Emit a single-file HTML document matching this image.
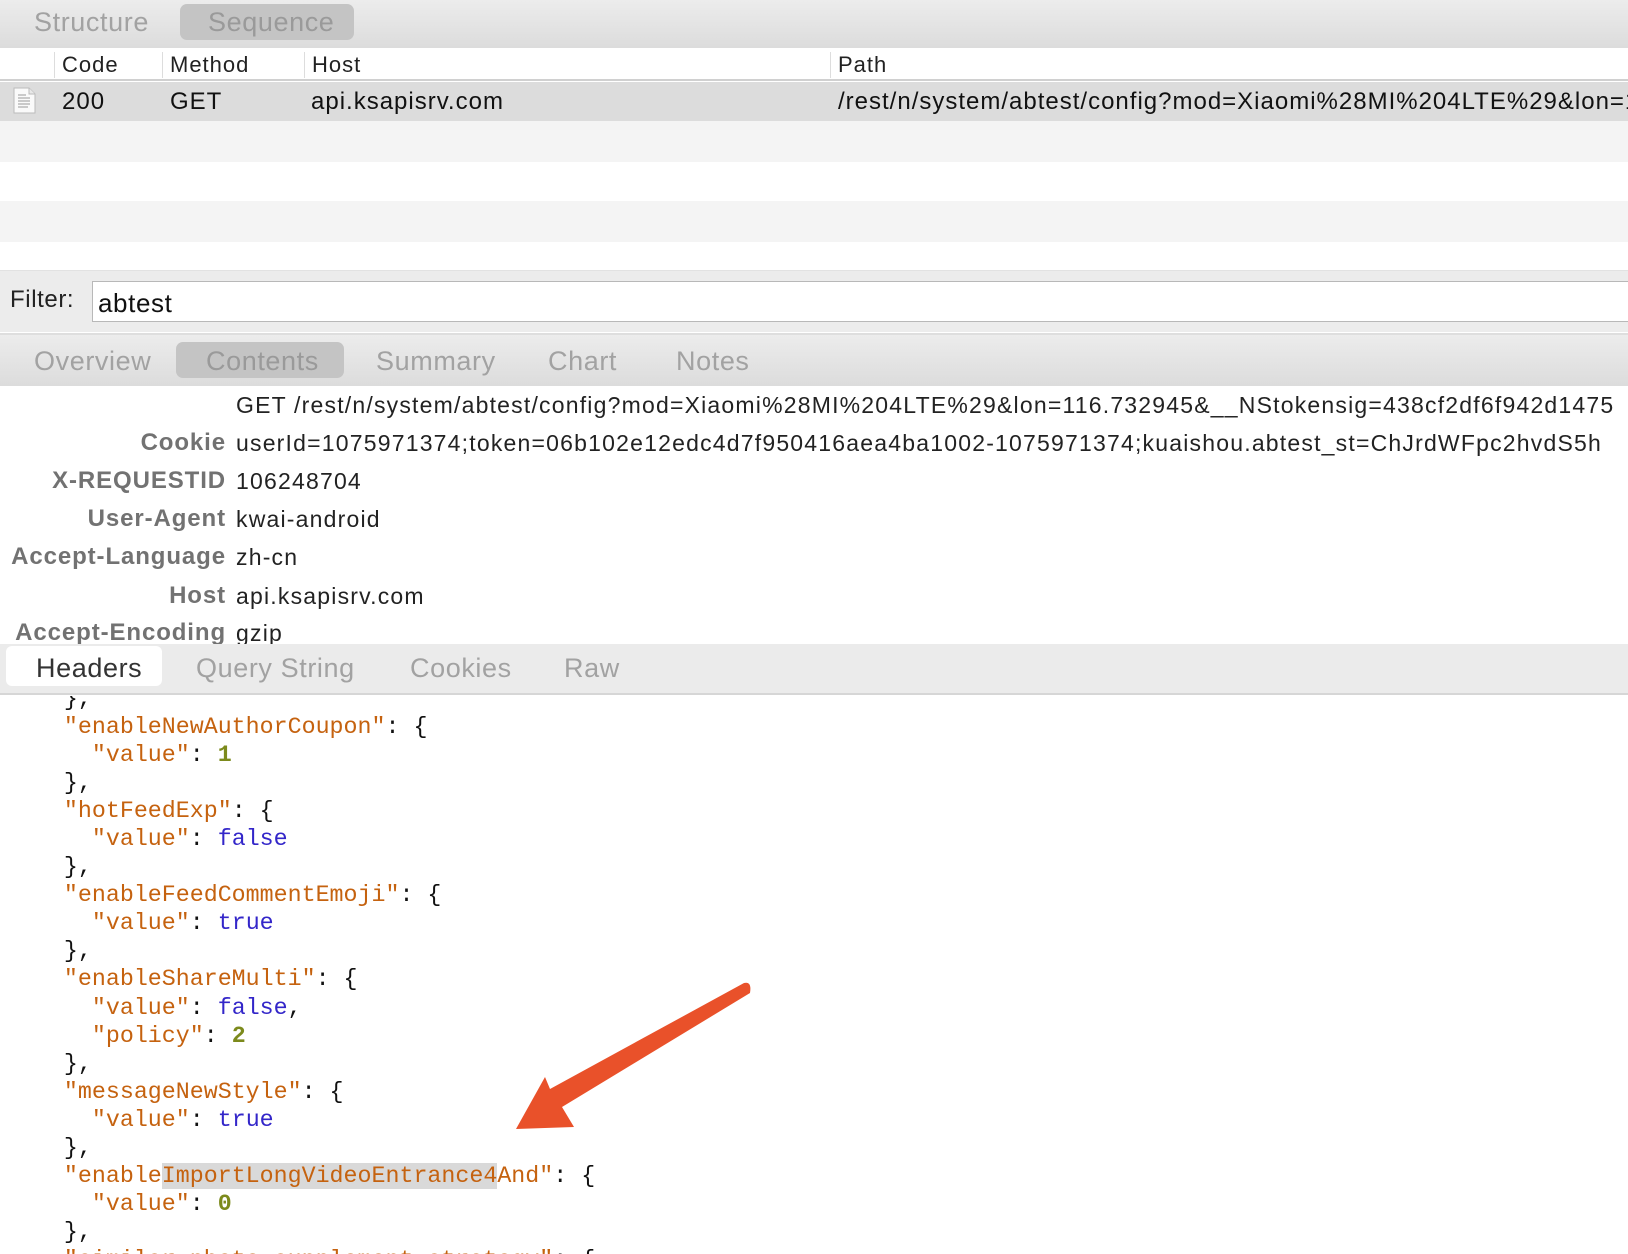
<!DOCTYPE html>
<html><head><meta charset="utf-8">
<style>
*{margin:0;padding:0;box-sizing:border-box}
html,body{width:1628px;height:1254px;overflow:hidden}
body{background:#fff;position:relative;font-family:"Liberation Sans",sans-serif;color:#222}
#w{position:absolute;left:0;top:0;width:1628px;height:1254px;overflow:hidden}
.a{position:absolute;white-space:nowrap}
.tb{background:linear-gradient(#ececec,#dcdcdc)}
.tab{font-size:27px;letter-spacing:0.6px;color:#a2a2a2;position:absolute;white-space:nowrap}
.pill{position:absolute;background:#c4c4c4;border-radius:7px}
.hd{font-size:22px;letter-spacing:1px;color:#222}
.sep{position:absolute;top:52px;width:1px;height:26px;background:#ddd}
.lbl{position:absolute;right:1402px;font-weight:bold;color:#727272;font-size:24px;letter-spacing:0.9px;white-space:nowrap}
.val{position:absolute;left:236px;font-size:23px;color:#222;white-space:nowrap;letter-spacing:1.2px}
.code{position:absolute;left:8px;font-family:"Liberation Mono",monospace;font-size:23.3px;line-height:28.05px;white-space:pre;color:#111}
.k{color:#c5620f}.n{color:#7c8a1c;font-weight:bold}.b{color:#3326c9}
.hl{background:#d9d9d9}
.big{font-size:24px;letter-spacing:1px;color:#111}
</style></head><body><div id="w">
<div class="a tb" style="left:0;top:0;width:1628px;height:48px"></div>
<div class="pill" style="left:180px;top:4px;width:174px;height:36px"></div>
<div class="tab" style="left:34px;top:7px">Structure</div>
<div class="tab" style="left:208px;top:7px;color:#9a9a9a">Sequence</div>
<div class="a" style="left:0;top:48px;width:1628px;height:33px;background:#fff;border-bottom:2px solid #d0d0d0"></div>
<div class="sep" style="left:54px"></div><div class="sep" style="left:162px"></div><div class="sep" style="left:304px"></div><div class="sep" style="left:830px"></div>
<div class="a hd" style="left:62px;top:52px">Code</div>
<div class="a hd" style="left:170px;top:52px">Method</div>
<div class="a hd" style="left:312px;top:52px">Host</div>
<div class="a hd" style="left:838px;top:52px">Path</div>
<div class="a" style="left:0;top:82px;width:1628px;height:39px;background:#dcdcdc"></div>
<svg class="a" style="left:13px;top:87px" width="24" height="27" viewBox="0 0 24 27"><path d="M1 1h15l6 6v19H1z" fill="#fafafa" stroke="#bbb"/><path d="M16 1v6h6" fill="#e8e8e8" stroke="#bbb"/><path d="M5 8h8M5 11h12M5 14h12M5 17h12M5 20h10" stroke="#9a9a9a" stroke-width="1"/></svg>
<div class="a big" style="left:62px;top:88px">200</div>
<div class="a big" style="left:170px;top:88px">GET</div>
<div class="a big" style="left:311px;top:88px">api.ksapisrv.com</div>
<div class="a big" style="left:838px;top:88px;width:790px;overflow:hidden">/rest/n/system/abtest/config?mod=Xiaomi%28MI%204LTE%29&amp;lon=116.732945</div>
<div class="a" style="left:0;top:121px;width:1628px;height:41px;background:#f4f4f4"></div>
<div class="a" style="left:0;top:201px;width:1628px;height:41px;background:#f4f4f4"></div>
<div class="a" style="left:0;top:270px;width:1628px;height:62px;background:#ececec;border-top:1px solid #e2e2e2"></div>
<div class="a" style="left:10px;top:286px;font-size:24px;letter-spacing:0.6px;color:#222">Filter:</div>
<div class="a" style="left:92px;top:281px;width:1536px;height:41px;background:#fff;border:1px solid #b8b8b8;border-right:none"></div>
<div class="a" style="left:98px;top:288px;font-size:26px;letter-spacing:0.6px;color:#111">abtest</div>
<div class="a tb" style="left:0;top:333px;width:1628px;height:53px;border-top:2px solid #dedede"></div>
<div class="pill" style="left:176px;top:342px;width:168px;height:36px"></div>
<div class="tab" style="left:34px;top:346px">Overview</div>
<div class="tab" style="left:206px;top:346px;color:#9a9a9a">Contents</div>
<div class="tab" style="left:376px;top:346px">Summary</div>
<div class="tab" style="left:548px;top:346px">Chart</div>
<div class="tab" style="left:676px;top:346px">Notes</div>
<div class="a" style="left:0;top:386px;width:1628px;height:258px;overflow:hidden">
<div class="val" style="top:6px">GET /rest/n/system/abtest/config?mod=Xiaomi%28MI%204LTE%29&amp;lon=116.732945&amp;__NStokensig=438cf2df6f942d1475</div>
<div class="lbl" style="top:43px">Cookie</div><div class="val" style="top:44px">userId=1075971374;token=06b102e12edc4d7f950416aea4ba1002-1075971374;kuaishou.abtest_st=ChJrdWFpc2hvdS5h</div>
<div class="lbl" style="top:81px">X-REQUESTID</div><div class="val" style="top:82px">106248704</div>
<div class="lbl" style="top:119px">User-Agent</div><div class="val" style="top:120px">kwai-android</div>
<div class="lbl" style="top:157px">Accept-Language</div><div class="val" style="top:158px">zh-cn</div>
<div class="lbl" style="top:196px">Host</div><div class="val" style="top:197px">api.ksapisrv.com</div>
<div class="lbl" style="top:233px">Accept-Encoding</div><div class="val" style="top:234px">gzip</div>
</div>
<div class="a" style="left:0;top:644px;width:1628px;height:51px;background:#ebebeb;border-bottom:2px solid #d6d6d6"></div>
<div class="a" style="left:6px;top:646px;width:156px;height:40px;background:#fff;border-radius:6px"></div>
<div class="tab" style="left:36px;top:653px;color:#333">Headers</div>
<div class="tab" style="left:196px;top:653px">Query String</div>
<div class="tab" style="left:410px;top:653px">Cookies</div>
<div class="tab" style="left:564px;top:653px">Raw</div>
<div class="a" style="left:0;top:696px;width:1628px;height:558px;overflow:hidden">
<div class="code" style="top:-11px">    },
    <span class="k">"enableNewAuthorCoupon"</span>: {
      <span class="k">"value"</span>: <span class="n">1</span>
    },
    <span class="k">"hotFeedExp"</span>: {
      <span class="k">"value"</span>: <span class="b">false</span>
    },
    <span class="k">"enableFeedCommentEmoji"</span>: {
      <span class="k">"value"</span>: <span class="b">true</span>
    },
    <span class="k">"enableShareMulti"</span>: {
      <span class="k">"value"</span>: <span class="b">false</span>,
      <span class="k">"policy"</span>: <span class="n">2</span>
    },
    <span class="k">"messageNewStyle"</span>: {
      <span class="k">"value"</span>: <span class="b">true</span>
    },
    <span class="k">"enable<span class="hl">ImportLongVideoEntrance4</span>And"</span>: {
      <span class="k">"value"</span>: <span class="n">0</span>
    },
    <span class="k">"similar_photo_supplement_strategy"</span>: {</div>
</div>
<svg class="a" style="left:0;top:0" width="1628" height="1254"><path d="M516 1129 L545 1077 L550 1089 L744 983 Q752 981 750 993 L562 1107 L574 1127 Z" fill="#e9512a"/></svg>
</div></body></html>
